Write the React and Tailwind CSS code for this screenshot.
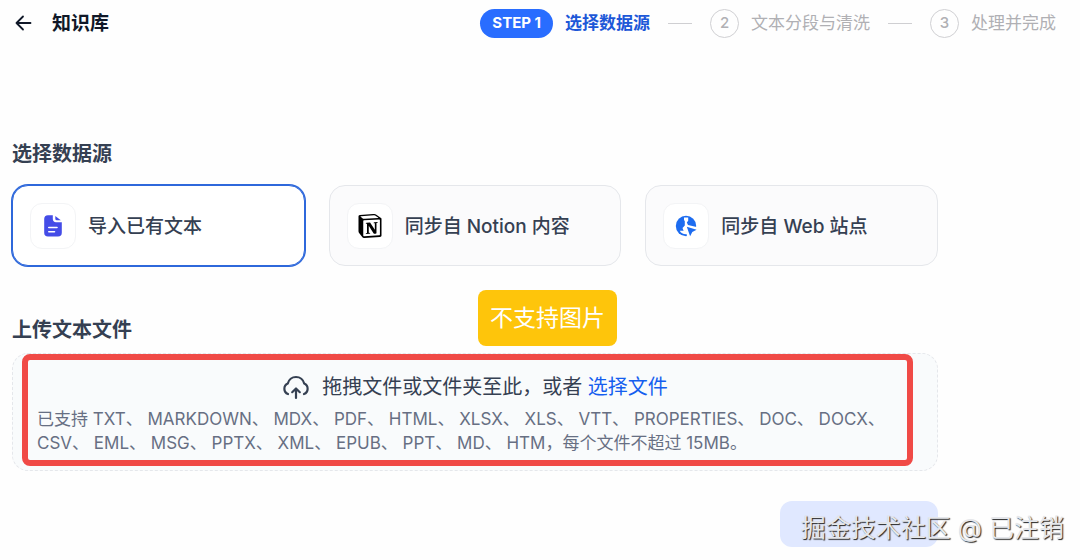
import React, { useRef, useState } from 'react'

const steps = ['选择数据源', '文本分段与清洗', '处理并完成']

const fileTypes = [
  'TXT', 'MARKDOWN', 'MDX', 'PDF', 'HTML', 'XLSX', 'XLS', 'VTT', 'PROPERTIES', 'DOC', 'DOCX',
  'CSV', 'EML', 'MSG', 'PPTX', 'XML', 'EPUB', 'PPT', 'MD', 'HTM'
]

/* ================= ICONS ================= */
const ArrowLeftIcon = () => (
  <svg width="18" height="18" viewBox="0 0 18 18" fill="none" stroke="currentColor" strokeWidth="1.8" strokeLinecap="round" strokeLinejoin="round">
    <path d="M16.500 9H2.500M9 2.500 2.500 9 9 15.500" />
  </svg>
)

const FileIcon = () => (
  <svg width="22" height="24" viewBox="0 0 22 24">
    <path fill="#444ce7" d="M6 1.200h4.800v3.800c0 2 1.200 3.200 3.200 3.200h5.800v10.600a3.800 3.800 0 0 1-3.800 3.800H6a3.800 3.800 0 0 1-3.800-3.800V5A3.800 3.800 0 0 1 6 1.200Z" />
    <path fill="#444ce7" d="M13.300 2 18.800 6.300h-4a1.500 1.500 0 0 1-1.500-1.500Z" />
    <path stroke="#fff" strokeWidth="1.600" strokeLinecap="round" d="M6.800 13.500h8.200M6.800 17.800h5.700" />
  </svg>
)

const NotionIcon = () => (
  <svg width="24" height="24" viewBox="0 0 24 24">
    <path fill="#000" d="M4.459 4.208c.746.606 1.026.56 2.428.466l13.215-.793c.28 0 .047-.28-.046-.326L17.860 1.968c-.42-.326-.981-.7-2.055-.607L3.010 2.295c-.466.046-.56.280-.374.466zm.793 3.080v13.904c0 .747.373 1.027 1.214.980l14.523-.840c.841-.046.935-.560.935-1.167V6.354c0-.606-.233-.933-.748-.887l-15.177.887c-.560.047-.747.327-.747.933zm14.337.745c.093.420 0 .840-.420.888l-.700.140v10.264c-.608.327-1.168.514-1.635.514-.748 0-.935-.234-1.495-.933l-4.577-7.186v6.952L12.210 19s0 .840-1.168.840l-3.222.186c-.093-.186 0-.653.327-.746l.840-.233V9.854L7.822 9.760c-.094-.420.140-1.026.793-1.073l3.456-.233 4.764 7.279v-6.440l-1.215-.139c-.093-.514.280-.887.747-.933zM1.936 1.035l13.310-.980c1.634-.140 2.055-.047 3.082.700l4.249 2.986c.700.513.934.653.934 1.213v16.378c0 1.026-.373 1.634-1.680 1.726l-15.458.934c-.980.047-1.448-.093-1.962-.747l-3.129-4.060c-.560-.747-.793-1.306-.793-1.960V2.667c0-.839.374-1.540 1.447-1.632z" />
  </svg>
)

const WebIcon = () => (
  <svg width="24" height="24" viewBox="0 0 24 24">
    <circle cx="12" cy="12" r="10.200" fill="#1d6cf0" />
    <path fill="#fff" d="M10 3.600h4.200v3.200l-1.400 1.600 1.200 2.700 8.600 1.900v10.400H12.800v-3.100c-3.600.2-6-1.300-7-3.500h3.800l-1.100-2.900 2.300-2.300V7.200L10 6Z" />
    <path fill="#1d6cf0" d="m12.800 12.700 9.800 3.100-4.300 2.200-2.200 4.300Z" />
  </svg>
)

const UploadIcon = () => (
  <svg width="28" height="26" viewBox="0 0 28 26" fill="none" stroke="currentColor" strokeWidth="2.200" strokeLinecap="round" strokeLinejoin="round">
    <path d="M6 20A5.600 5.600 0 0 1 5.800 9.600 8.400 8.400 0 0 1 22.200 9.600 5.600 5.600 0 0 1 22 20M14 24v-9M10.200 18.200 14 14.500l3.800 3.700" />
  </svg>
)

const sources = [
  { id: 'file', label: '导入已有文本', Icon: FileIcon },
  { id: 'notion', label: '同步自 Notion 内容', Icon: NotionIcon },
  { id: 'web', label: '同步自 Web 站点', Icon: WebIcon }
]

/* ================= STEPS ================= */
const StepBar = () => (
  <ol className="flex items-center gap-[18px]">
    {steps.map((name, idx) => (
      <li key={name} className="flex items-center gap-[18px]">
        {idx > 0 && <span className="h-px w-6 bg-[#cfcfd2]"></span>}
        <span className="flex items-center gap-3">
          {idx === 0
            ? <span className="flex h-[29px] items-center rounded-full bg-[#296dff] px-3 text-[15px] font-bold text-white">STEP 1</span>
            : <span className="flex size-[29px] items-center justify-center rounded-full border border-[#d0d0d3] text-[15px] font-medium text-[#b0b0b4]">{idx + 1}</span>}
          <span className={idx === 0 ? 'pt-0.5 text-[17px] font-bold text-[#1d58d8]' : 'pt-0.5 text-[17px] text-[#b0b0b4]'}>{name}</span>
        </span>
      </li>
    ))}
  </ol>
)

export default function App() {
  const [source, setSource] = useState('file')
  const fileInput = useRef(null)

  return (
    <div className="relative min-h-screen bg-[#fefefe] font-[Inter,'Noto_Sans_CJK_SC',sans-serif] text-[#354052]">
      <header className="flex h-[46px] items-center justify-between pr-6 pl-3.5 text-[#101828]">
        <div className="flex items-center gap-5">
          <button aria-label="返回"><ArrowLeftIcon /></button>
          <h1 className="pt-0.5 text-[19px] font-bold">知识库</h1>
        </div>
        <StepBar />
      </header>

      <main className="max-w-[938px] pt-[94px] pl-3">
        <h2 className="text-xl leading-7 font-bold">选择数据源</h2>
        <div className="mt-[17px] grid grid-cols-3 gap-6">
          {sources.map(({ id, label, Icon }) => (
            <button
              key={id}
              onClick={() => setSource(id)}
              className={`flex h-[81px] items-center gap-3 rounded-2xl border px-[17px] text-left ${source === id ? 'border-[#2e68db] bg-white ring-1 ring-[#2e68db]' : 'border-gray-200 bg-[#fbfbfc]'}`}
            >
              <span className="flex size-[46px] items-center justify-center rounded-xl border border-gray-100 bg-white"><Icon /></span>
              <span className="pt-1 text-[19px] font-medium">{label}</span>
            </button>
          ))}
        </div>

        <h2 className="mt-[50px] text-xl leading-7 font-bold">上传文本文件</h2>
        <div className="relative mt-[9px] rounded-2xl border border-dashed border-gray-200 bg-[#f9fbfc] px-6 pt-[17px] pb-[15px]">
          <div className="flex items-center justify-center gap-3 text-xl leading-8">
            <UploadIcon />
            <div>
              拖拽文件或文件夹至此，或者{' '}
              <button onClick={() => fileInput.current.click()} className="text-[#155eef]">选择文件</button>
              <input ref={fileInput} type="file" multiple aria-label="选择文件" className="hidden" />
            </div>
          </div>
          <p className="mt-1 text-[17px] leading-6 text-[#676f83]">{`已支持 ${fileTypes.join('、 ')}，每个文件不超过 15MB。`}</p>

          {/* callout frame and its note */}
          <div className="pointer-events-none absolute top-0 right-6 bottom-1 left-[9px] rounded-lg border-[6px] border-[#f04a46]"></div>
          <div className="absolute bottom-full left-1/2 mb-2 ml-[3px] rounded-lg bg-[#fec50b] px-3 py-2 text-[23px] leading-10 text-white">不支持图片</div>
        </div>

        <div className="mt-[30px] flex justify-end">
          <button aria-label="下一步" className="h-[46px] w-[158px] rounded-xl bg-[#e0e8ff]"></button>
        </div>
      </main>

      <div className="absolute right-4 bottom-3.5 text-[25px] leading-9 text-gray-200 [text-shadow:1px_1px_1px_#222]">掘金技术社区 @ 已注销</div>
    </div>
  )
}
